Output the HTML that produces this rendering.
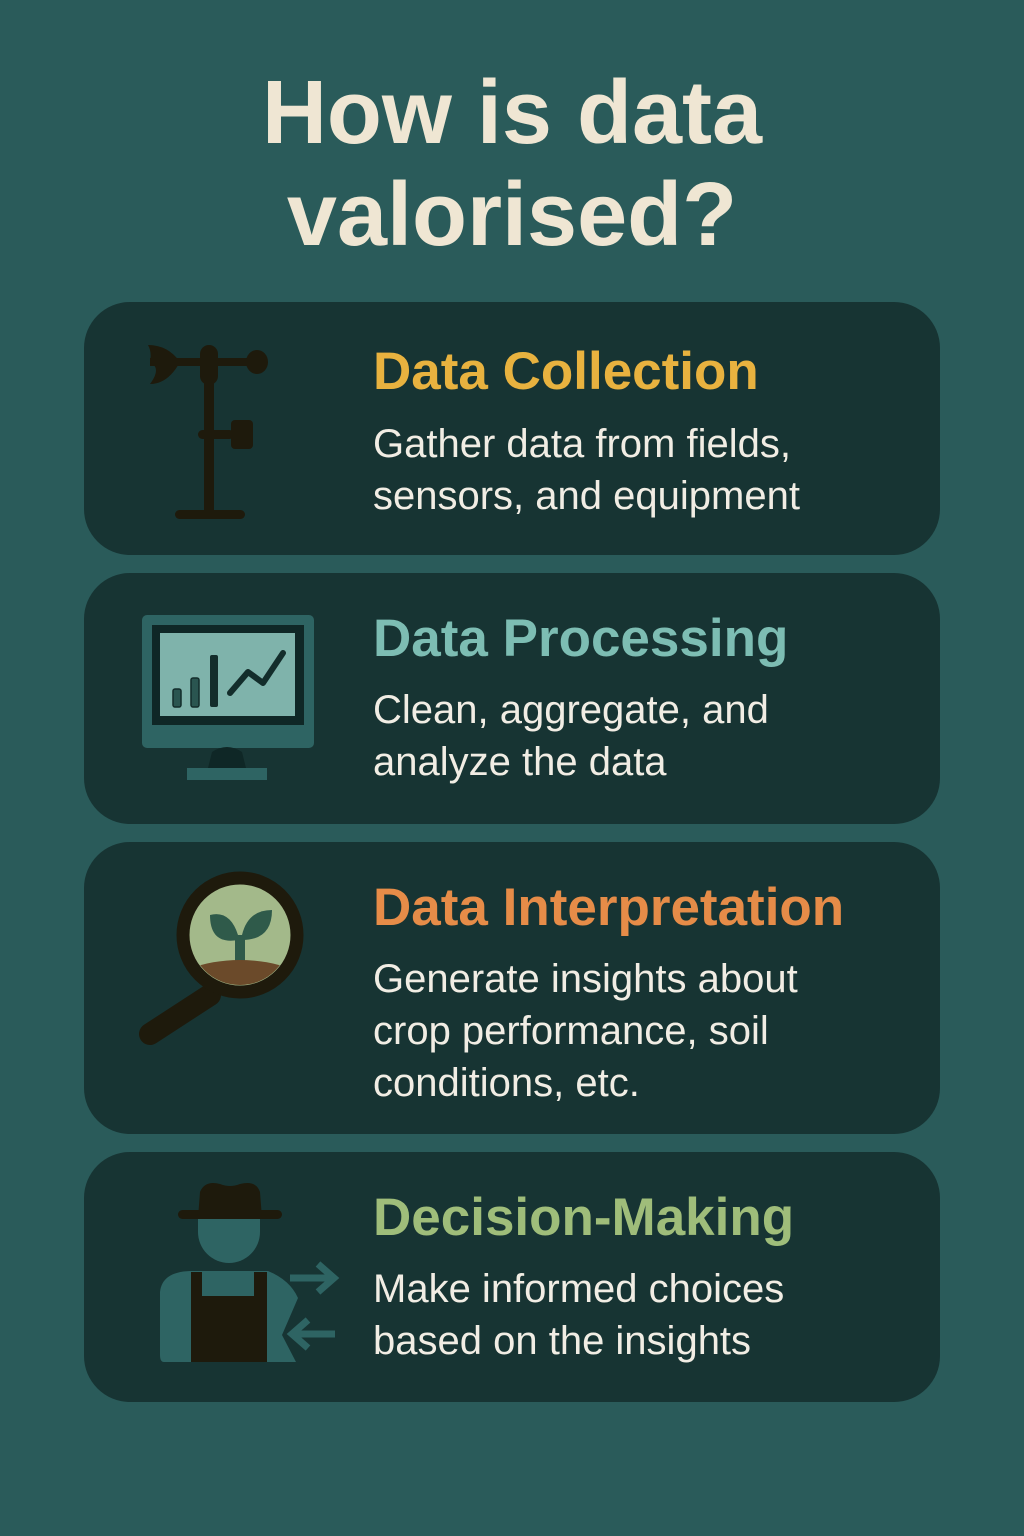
<!DOCTYPE html>
<html><head><meta charset="utf-8"><style>
body{margin:0;width:1024px;height:1536px;background:#2a5b5a;position:relative;overflow:hidden;font-family:"Liberation Sans",sans-serif}
.t{position:absolute;left:0;width:1024px;text-align:center;color:#efe6d3;font-weight:bold;font-size:90px;letter-spacing:0px}
.card{position:absolute;left:84px;width:856px;background:#173433;border-radius:46px}
.h{position:absolute;left:373px;font-weight:bold;font-size:53px;white-space:nowrap}
.b{position:absolute;left:373px;color:#f1ede4;font-size:40px;line-height:52px;white-space:nowrap}
svg{position:absolute;left:0;top:0}
</style></head><body>
<div class="t" style="top:62px">How is data</div>
<div class="t" style="top:164px">valorised?</div>
<div class="card" style="top:302px;height:253px"></div>
<div class="card" style="top:573px;height:251px"></div>
<div class="card" style="top:842px;height:292px"></div>
<div class="card" style="top:1152px;height:250px"></div>

<div class="h" style="top:341px;color:#e8b23f">Data Collection</div>
<div class="b" style="top:418px">Gather data from fields,<br>sensors, and equipment</div>
<div class="h" style="top:608px;color:#7dbdb3">Data Processing</div>
<div class="b" style="top:684px">Clean, aggregate, and<br>analyze the data</div>
<div class="h" style="top:877px;color:#e68c48">Data Interpretation</div>
<div class="b" style="top:953px">Generate insights about<br>crop performance, soil<br>conditions, etc.</div>
<div class="h" style="top:1187px;color:#9fbd7a">Decision-Making</div>
<div class="b" style="top:1263px">Make informed choices<br>based on the insights</div>

<svg width="1024" height="1536">
<g fill="#1e1a0c">
<rect x="204" y="350" width="10" height="165"/>
<rect x="200" y="345" width="18" height="40" rx="9"/>
<rect x="150" y="358" width="110" height="8"/>
<ellipse cx="257" cy="362" rx="11" ry="12"/>
<path d="M148 345 Q168 345 180 362 Q168 384 150 384 Q162 368 150 362 Q152 352 148 345Z"/>
<rect x="175" y="510" width="70" height="9" rx="4.5"/>
<rect x="198" y="430" width="36" height="9" rx="4.5"/>
<rect x="231" y="420" width="22" height="29" rx="4"/>
</g>
<rect x="142" y="615" width="172" height="133" rx="5" fill="#2e6463"/>
<rect x="152" y="625" width="152" height="100" fill="#0f2726"/>
<rect x="160" y="633" width="135" height="83" fill="#7fb3ab"/>
<rect x="173" y="689" width="8" height="18" rx="2" fill="#2a5550" stroke="#132d2b" stroke-width="1.5"/>
<rect x="191" y="678" width="8" height="29" rx="2" fill="#2a5550" stroke="#132d2b" stroke-width="1.5"/>
<rect x="210" y="655" width="8" height="52" rx="2" fill="#132d2b"/>
<path d="M230 693 L248 672 L263 683 L283 653" fill="none" stroke="#132d2b" stroke-width="6" stroke-linecap="round" stroke-linejoin="round"/>
<path d="M208 768 L212 752 Q227 742 242 752 L246 768Z" fill="#0f2726"/>
<rect x="187" y="768" width="80" height="12" fill="#2e6463"/>
<line x1="210" y1="995" x2="150" y2="1034" stroke="#1e1a0c" stroke-width="22" stroke-linecap="round"/>
<circle cx="240" cy="935" r="57" fill="#a3b98a" stroke="#1e1a0c" stroke-width="13"/>
<clipPath id="c"><circle cx="240" cy="935" r="50"/></clipPath>
<g clip-path="url(#c)">
<rect x="235" y="935" width="10" height="30" fill="#2f5a4a"/>
<path d="M238 940 Q210 945 210 915 Q230 910 238 935Z" fill="#2f5a4a"/>
<path d="M242 940 Q272 940 272 910 Q248 910 242 935Z" fill="#2f5a4a"/>
<ellipse cx="240" cy="990" rx="70" ry="30" fill="#6b4a2a"/>
</g>
<path d="M198 1218 L200 1192 Q205 1180 220 1184 Q230 1188 240 1184 Q256 1180 260 1192 L262 1218Z" fill="#1e1a0c"/>
<rect x="178" y="1210" width="104" height="9" rx="4.5" fill="#1e1a0c"/>
<path d="M198 1219 L260 1219 L260 1232 A31 31 0 0 1 198 1232Z" fill="#2e6463"/>
<path d="M160 1292 Q162 1272 190 1271 L268 1271 Q290 1280 298 1298 L282 1335 L296 1362 L164 1362 Q160 1362 160 1355Z" fill="#2e6463"/>
<rect x="191" y="1272" width="76" height="90" fill="#1e1a0c"/>
<rect x="202" y="1272" width="52" height="24" fill="#2e6463"/>
<path d="M290 1278 L333 1278 M318 1264 L334 1278 L318 1292" fill="none" stroke="#2e6463" stroke-width="7"/>
<path d="M335 1334 L292 1334 M308 1320 L292 1334 L308 1348" fill="none" stroke="#2e6463" stroke-width="7"/>
</svg>
</body></html>
